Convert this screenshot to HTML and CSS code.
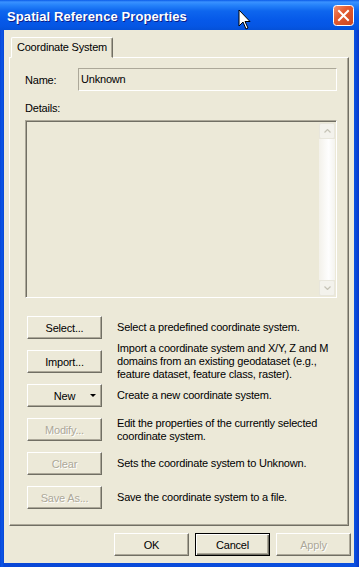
FILE: index.html
```html
<!DOCTYPE html>
<html lang="en">
<head>
    <meta charset="UTF-8">
    <title>Spatial Reference Properties</title>
    <link rel="stylesheet" href="styles.css">
</head>
<body>
    <div class="window">
        <div class="titlebar">
            <span class="title">Spatial Reference Properties</span>
            <svg class="close" width="21" height="21" viewBox="0 0 21 21">
                <defs>
                    <linearGradient id="closeFill" x1="0" y1="0" x2="1" y2="1">
                        <stop offset="0" stop-color="#f29473"/>
                        <stop offset="0.4" stop-color="#e35b31"/>
                        <stop offset="1" stop-color="#cc4520"/>
                    </linearGradient>
                </defs>
                <rect x="0.5" y="0.5" width="20" height="20" rx="3" fill="url(#closeFill)" stroke="#fff"/>
                <path d="M6 6 L15 15 M15 6 L6 15" stroke="#fff" stroke-width="2" stroke-linecap="square"/>
            </svg>
        </div>

        <div class="client">
            <div class="tabs">
                <div class="tab">Coordinate System</div>
            </div>

            <div class="panel">
                <div class="name-row">
                    <span class="label name-label">Name:</span>
                    <div class="field">Unknown</div>
                </div>

                <div class="label details-label">Details:</div>
                <div class="details-box">
                    <div class="scrollbar">
                        <div class="sb-btn">
                            <svg width="7" height="4" viewBox="0 0 7 4"><path d="M0.5 3.5 L3.5 0.5 L6.5 3.5" fill="none" stroke="#c5c3b6" stroke-width="1.2"/></svg>
                        </div>
                        <div class="sb-track"></div>
                        <div class="sb-btn">
                            <svg width="7" height="4" viewBox="0 0 7 4"><path d="M0.5 0.5 L3.5 3.5 L6.5 0.5" fill="none" stroke="#c5c3b6" stroke-width="1.2"/></svg>
                        </div>
                    </div>
                </div>

                <!-- buttons + descriptions -->
                <div class="actions">
                    <button class="btn">Select...</button>
                    <p class="desc">Select a predefined coordinate system.</p>

                    <button class="btn">Import...</button>
                    <p class="desc">Import a coordinate system and X/Y, Z and M<br>domains from an existing geodataset (e.g.,<br>feature dataset, feature class, raster).</p>

                    <button class="btn btn-menu"><span></span><span>New</span><span class="arrow"></span></button>
                    <p class="desc">Create a new coordinate system.</p>

                    <button class="btn" disabled>Modify...</button>
                    <p class="desc">Edit the properties of the currently selected<br>coordinate system.</p>

                    <button class="btn" disabled>Clear</button>
                    <p class="desc">Sets the coordinate system to Unknown.</p>

                    <button class="btn" disabled>Save As...</button>
                    <p class="desc">Save the coordinate system to a file.</p>
                </div>
            </div>

            <div class="footer">
                <button class="btn">OK</button>
                <button class="btn btn-default">Cancel</button>
                <button class="btn" disabled>Apply</button>
            </div>
        </div>

        <svg class="cursor" width="13" height="21" viewBox="0 0 13 21">
            <path d="M1 1 L1 17 L5 13 L8 20 L10 19 L7 12.5 L12 12.5 Z" fill="#fff" stroke="#000" stroke-width="1" stroke-linejoin="miter"/>
        </svg>
    </div>
</body>
</html>
```

FILE: styles.css
```css
body {
    margin: 0;
    padding: 0;
    font-family: "Liberation Sans", Arial, sans-serif;
    font-size: 11px;
    letter-spacing: -0.2px;
    background: #0a4fdf;
}
.window {
    position: relative;
    width: 359px;
    height: 567px;
    background: linear-gradient(to right, #0846d8 0, #0a56e6 2px, #0846d6 4px, #0a4fdf 355px, #0636c8 359px);
    display: flex;
    flex-direction: column;
    overflow: hidden;
}
.titlebar {
    height: 30px;
    flex: none;
    display: flex;
    align-items: center;
    justify-content: space-between;
    padding: 0 5px 0 7px;
    background: linear-gradient(to bottom, #0b5be8 0, #3a92ff 2px, #2683fa 5px, #0e66ee 11px, #0659e9 20px, #0556e4 26px, #0450d8 30px);
}
.title {
    color: #fff;
    font-weight: bold;
    font-size: 13px;
    letter-spacing: 0.1px;
    text-shadow: 1px 1px #0a1e8a;
    margin-top: 2px;
}
.close {
    display: block;
    margin-top: 1px;
}
.client {
    flex: 1;
    margin: 0 5px 4px 4px;
    background: #ece9d8;
    display: flex;
    flex-direction: column;
}
.tabs {
    display: flex;
    padding: 7px 0 0 7px;
}
.tab {
    position: relative;
    z-index: 1;
    height: 19px;
    width: 100px;
    line-height: 18px;
    text-align: center;
    background: #ece9d8;
    border: 1px solid;
    border-color: #fff #716f64 #ece9d8 #fff;
    box-shadow: inset -1px 0 #aca899;
    border-radius: 2px 2px 0 0;
    margin-bottom: -1px;
}
.panel {
    margin: 0 5px;
    border: 1px solid;
    border-color: #fff #716f64 #716f64 #fff;
    box-shadow: inset -1px -1px #aca899;
    padding: 10px 11px 16px 15px;
}
.name-row {
    display: flex;
    align-items: center;
}
.name-label {
    width: 53px;
}
.field {
    flex: 1;
    height: 21px;
    line-height: 21px;
    padding-left: 2px;
    border: 1px solid;
    border-color: #aca899 #fff #fff #aca899;
}
.details-label {
    margin-top: 11px;
    line-height: 13px;
}
.details-box {
    margin-top: 5px;
    height: 173px;
    border: 1px solid;
    border-color: #aca899 #fff #fff #aca899;
    box-shadow: inset 1px 1px #716f64;
    display: flex;
    justify-content: flex-end;
    padding: 2px 1px 1px 2px;
}
.scrollbar {
    width: 16px;
    display: flex;
    flex-direction: column;
}
.sb-btn {
    height: 14px;
    border: 1px solid #e8e6dc;
    border-radius: 2px;
    background: #f3f2ec;
    display: flex;
    align-items: center;
    justify-content: center;
}
.sb-track {
    flex: 1;
    background: linear-gradient(to right, #f3f1ea, #fefefe 60%, #f4f3ee);
}
.actions {
    margin-top: 18px;
    display: grid;
    grid-template-columns: 75px 1fr;
    grid-auto-rows: 23px;
    column-gap: 15px;
    row-gap: 11px;
    margin-left: 2px;
}
.desc {
    margin: 0;
    line-height: 13px;
    align-self: center;
}
.btn {
    width: 75px;
    height: 23px;
    padding: 0;
    font-family: "Liberation Sans", Arial, sans-serif;
    font-size: 11px;
    letter-spacing: -0.2px;
    color: #000;
    background: #ece9d8;
    border: 1px solid;
    border-color: #fff #716f64 #716f64 #fff;
    box-shadow: inset -1px -1px #aca899;
}
.btn:disabled {
    color: #aca899;
    text-shadow: 1px 1px #fff;
}
.btn-default {
    border-color: #000;
    box-shadow: inset 1px 1px #fff, inset -1px -1px #716f64, inset -2px -2px #aca899;
}
.btn-menu {
    display: grid;
    grid-template-columns: 1fr auto 1fr;
    align-items: center;
}
.arrow {
    justify-self: end;
    margin-right: 5px;
    width: 0;
    height: 0;
    border-left: 3px solid transparent;
    border-right: 3px solid transparent;
    border-top: 3px solid #000;
}
.footer {
    display: flex;
    justify-content: flex-end;
    gap: 6px;
    padding: 7px 3px 0 0;
}
.cursor {
    position: absolute;
    left: 238px;
    top: 9px;
}
```
